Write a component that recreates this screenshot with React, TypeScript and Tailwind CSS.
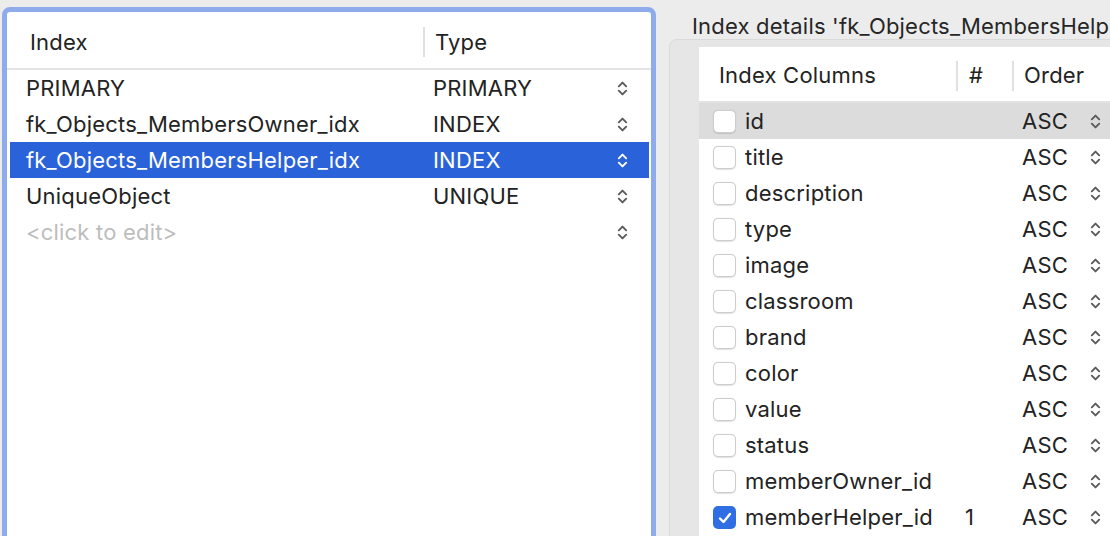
import React from "react";

const font = { fontFamily: "Inter, 'Liberation Sans', sans-serif" };

function Stepper({ color = "#5a5a5a" }: { color?: string }) {
  return (
    <svg width="11" height="17" viewBox="0 0 11 17" fill="none">
      <path d="M1.8 6.3 L5.5 2.6 L9.2 6.3" stroke={color} strokeWidth="1.9" strokeLinecap="round" strokeLinejoin="round" />
      <path d="M1.8 10.7 L5.5 14.4 L9.2 10.7" stroke={color} strokeWidth="1.9" strokeLinecap="round" strokeLinejoin="round" />
    </svg>
  );
}

const indexes = [
  { name: "PRIMARY", type: "PRIMARY" },
  { name: "fk_Objects_MembersOwner_idx", type: "INDEX" },
  { name: "fk_Objects_MembersHelper_idx", type: "INDEX", selected: true },
  { name: "UniqueObject", type: "UNIQUE" },
];

const columns = [
  "id",
  "title",
  "description",
  "type",
  "image",
  "classroom",
  "brand",
  "color",
  "value",
  "status",
  "memberOwner_id",
  "memberHelper_id",
];

function Checkbox({ checked }: { checked?: boolean }) {
  if (checked) {
    return (
      <div className="w-[23px] h-[23px] rounded-[5px] bg-[#2f6fe3] flex items-center justify-center">
        <svg width="16" height="16" viewBox="0 0 16 16" fill="none">
          <path d="M3 8.5 L6.5 12 L13 4" stroke="white" strokeWidth="2.4" strokeLinecap="round" strokeLinejoin="round" />
        </svg>
      </div>
    );
  }
  return <div className="w-[23px] h-[23px] rounded-[5px] bg-white border border-[#cdcdcd] shadow-[0_0.5px_1px_rgba(0,0,0,0.12)]" />;
}

export default function App() {
  return (
    <div className="w-[1110px] h-[536px] bg-[#ececec] overflow-hidden flex text-[22px] tracking-[0.2px] text-[#232323]" style={font}>
      {/* Left panel */}
      <div className="ml-[2px] mt-[7px] w-[654px] h-[560px] shrink-0 rounded-[8px] border-[5px] border-[#8eabec] bg-white flex flex-col">
        <div className="h-[58px] pt-[4px] flex items-center border-b-2 border-[#e3e3e3]">
          <div className="w-[416px] pl-[23px]">Index</div>
          <div className="w-[2px] h-[30px] bg-[#e0e0e0]" />
          <div className="pl-[10px]">Type</div>
        </div>
        <div className="flex flex-col pl-[3px] pr-[2px]">
          {indexes.map((r) => (
            <div
              key={r.name}
              className={
                "h-[36px] flex items-center " +
                (r.selected ? "bg-[#2a62d9] text-white" : "")
              }
            >
              <div className="w-[423px] pl-[16px] whitespace-nowrap">{r.name}</div>
              <div className="w-[184px]">{r.type}</div>
              <Stepper color={r.selected ? "#ffffff" : "#5a5a5a"} />
            </div>
          ))}
          <div className="h-[36px] flex items-center">
            <div className="w-[607px] pl-[16px] text-[#bdbdbd]">&lt;click to edit&gt;</div>
            <Stepper />
          </div>
        </div>
      </div>

      {/* Right side */}
      <div className="ml-[13px] flex flex-col shrink-0 w-[460px]">
        <div className="h-[40px] pl-[23px] pt-[13px] leading-[26px] whitespace-nowrap text-[#262626]">
          Index details 'fk_Objects_MembersHelper_idx'
        </div>
        <div className="h-[520px] rounded-[8px] border border-[#dadada] bg-[#e6e6e6] pl-[29px] pt-[7px]">
          <div className="bg-white h-[520px] flex flex-col">
            <div className="h-[56px] pt-[3px] flex items-center border-b-2 border-[#e3e3e3]">
              <div className="w-[257px] pl-[20px]">Index Columns</div>
              <div className="w-[2px] h-[30px] bg-[#e0e0e0]" />
              <div className="w-[54px] pl-[11px]">#</div>
              <div className="w-[2px] h-[30px] bg-[#e0e0e0]" />
              <div className="pl-[10px]">Order</div>
            </div>
            {columns.map((c, i) => (
              <div
                key={c}
                className={"h-[36px] pt-[1px] flex items-center " + (i === 0 ? "bg-[#dcdcdc]" : "")}
              >
                <div className="pl-[14px] pr-[9px]">
                  <Checkbox checked={c === "memberHelper_id"} />
                </div>
                <div className="w-[220px] whitespace-nowrap">{c}</div>
                <div className="w-[57px]">{c === "memberHelper_id" ? "1" : ""}</div>
                <div className="w-[68px]">ASC</div>
                <Stepper />
              </div>
            ))}
          </div>
        </div>
      </div>
    </div>
  );
}
